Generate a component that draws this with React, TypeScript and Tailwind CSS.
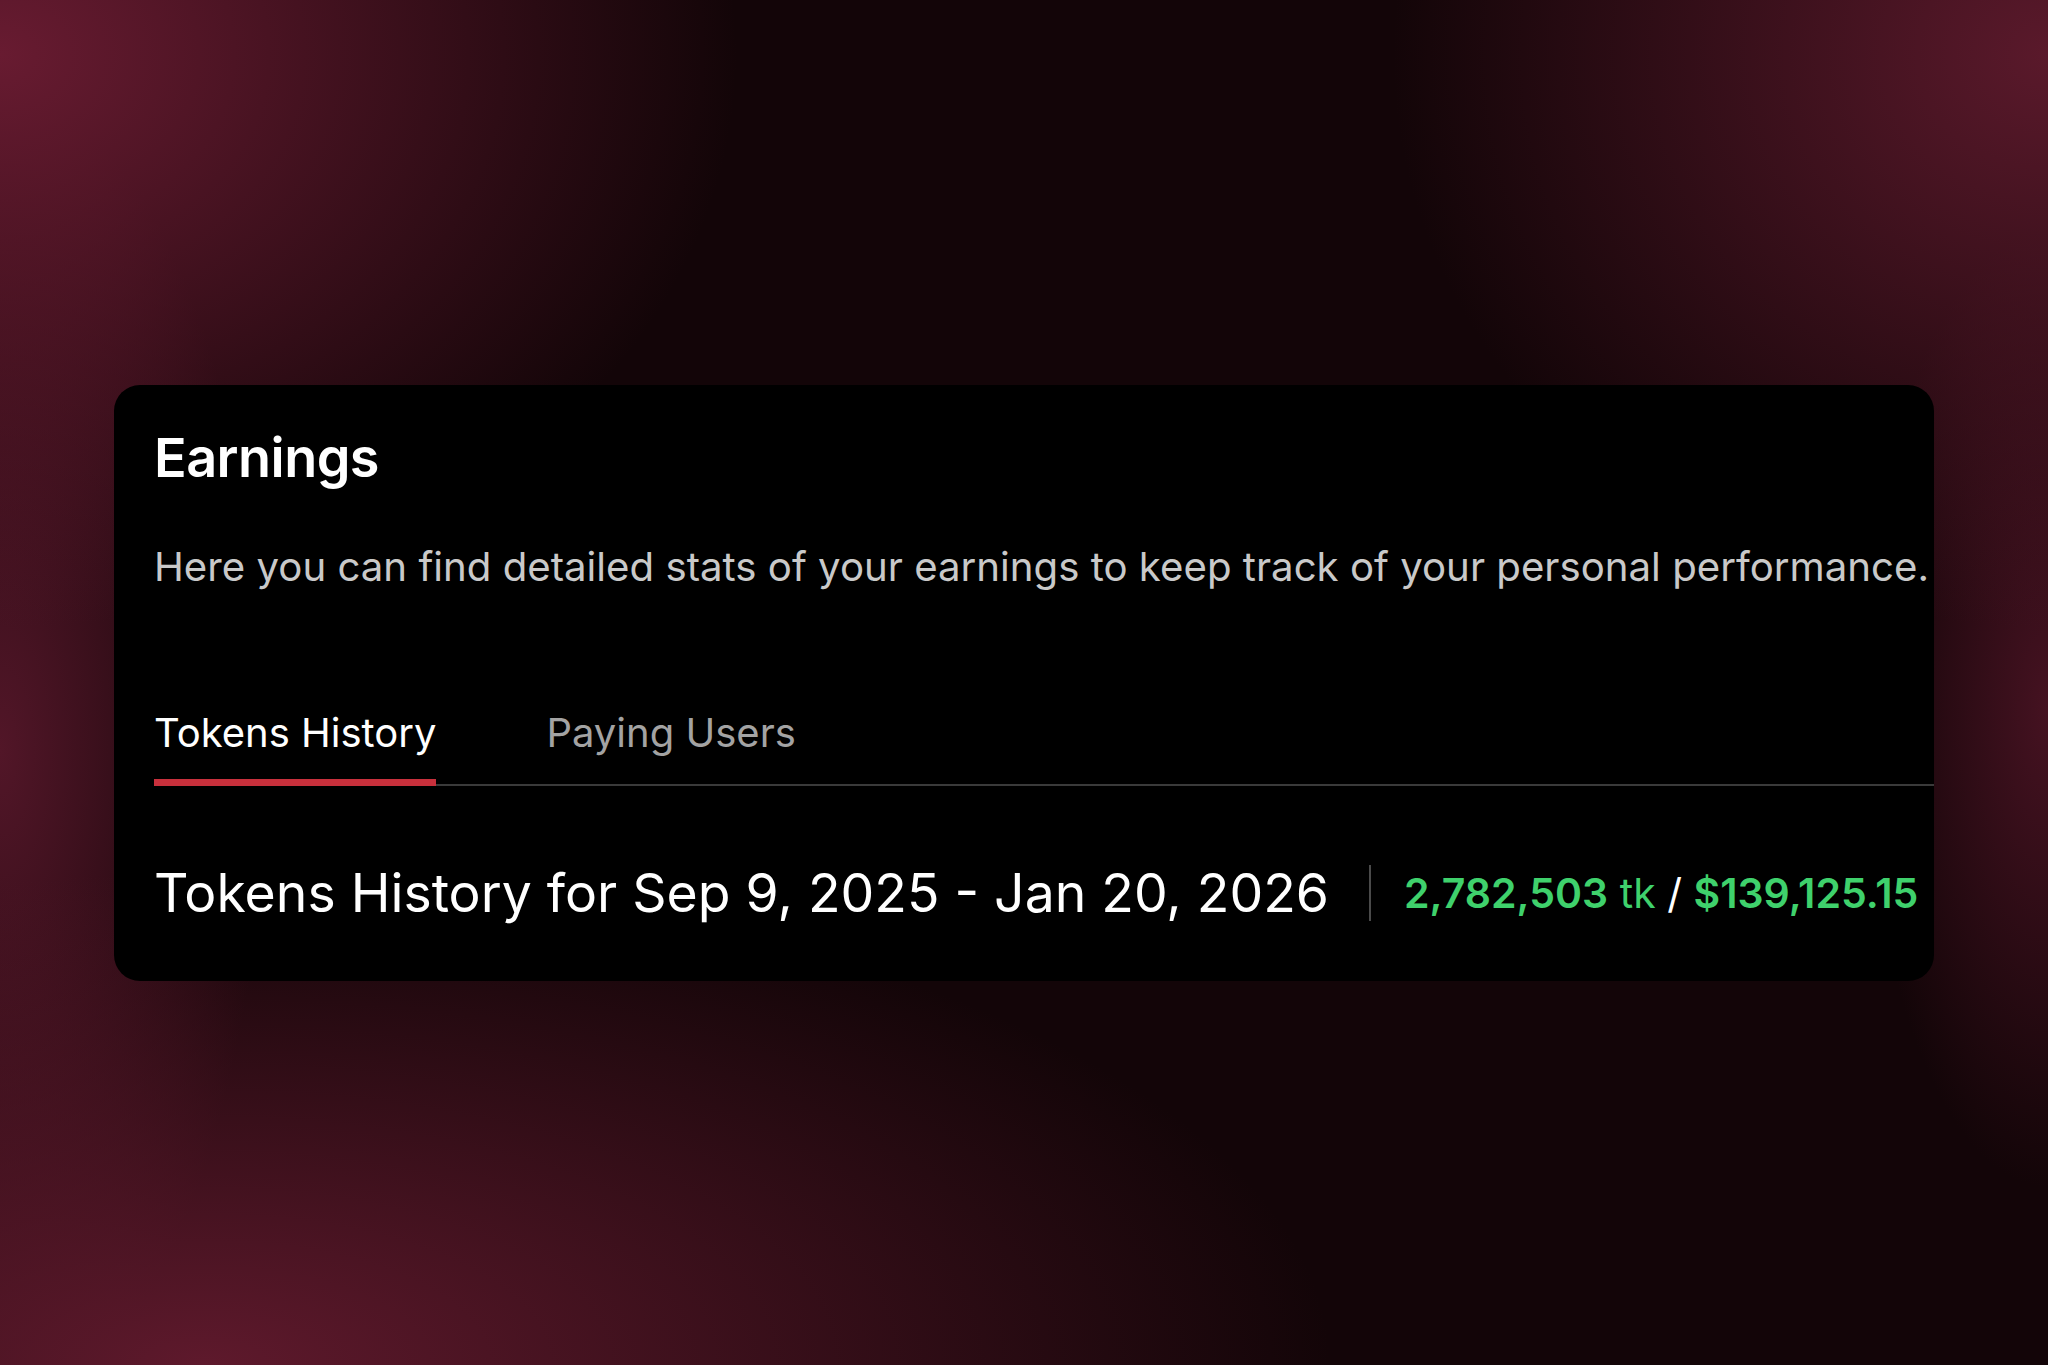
import type { FunctionComponent } from 'react';

const tabs = ['Tokens History', 'Paying Users'];

const App: FunctionComponent = () => (
  <div className="h-screen w-full flex items-center justify-center bg-[#130508] bg-[radial-gradient(ellipse_36%_42%_at_0%_4%,#681b31_0%,transparent_100%),radial-gradient(ellipse_55%_36%_at_10%_100%,#5e192c_0%,transparent_100%),radial-gradient(ellipse_32%_42%_at_100%_4%,#5a192b_0%,transparent_100%),radial-gradient(ellipse_13%_48%_at_0%_55%,#521628_0%,transparent_100%),radial-gradient(ellipse_9%_35%_at_100%_52%,#451221_0%,transparent_100%)] font-['Inter',sans-serif]">
    <div className="w-[1820px] h-[596px] rounded-[26px] bg-black pt-[40px] shrink-0">
      <div className="pl-[40px]">
        <h1 className="text-[54px] leading-[66px] font-semibold text-white tracking-[-0.01em]">Earnings</h1>
        <p className="mt-[52px] text-[40.2px] leading-[48px] text-[#c9c9c9] whitespace-nowrap">
          Here you can find detailed stats of your earnings to keep track of your personal performance.
        </p>
      </div>

      <div className="mt-[118px] ml-[40px] flex gap-[110px] border-b-2 border-[#3a3a3a]">
        {tabs.map((t, i) => (
          <div
            key={t}
            className={
              i === 0
                ? 'text-[40px] leading-[48px] pb-[22px] -mb-[2px] border-b-[7px] border-[#c8303c] text-white'
                : 'text-[40px] leading-[48px] pb-[22px] -mb-[2px] border-b-[7px] border-transparent text-[#a3a3a3]'
            }
          >
            {t}
          </div>
        ))}
      </div>

      <div className="mt-[77px] pl-[40px] flex items-center">
        <h2 className="text-[53.5px] leading-[60px] text-white whitespace-nowrap">
          Tokens History for Sep 9, 2025 - Jan 20, 2026
        </h2>
        <div className="ml-[40px] w-[2px] h-[56px] bg-[#4a4a4a]" />
        <div className="ml-[33px] text-[41px] leading-[48px] whitespace-nowrap">
          <span className="font-semibold text-[#3fd16c]">2,782,503</span>
          <span className="text-[#3fd16c]"> tk </span>
          <span className="text-white">/ </span>
          <span className="font-semibold text-[#3fd16c]">$139,125.15</span>
        </div>
      </div>
    </div>
  </div>
);

export default App;
